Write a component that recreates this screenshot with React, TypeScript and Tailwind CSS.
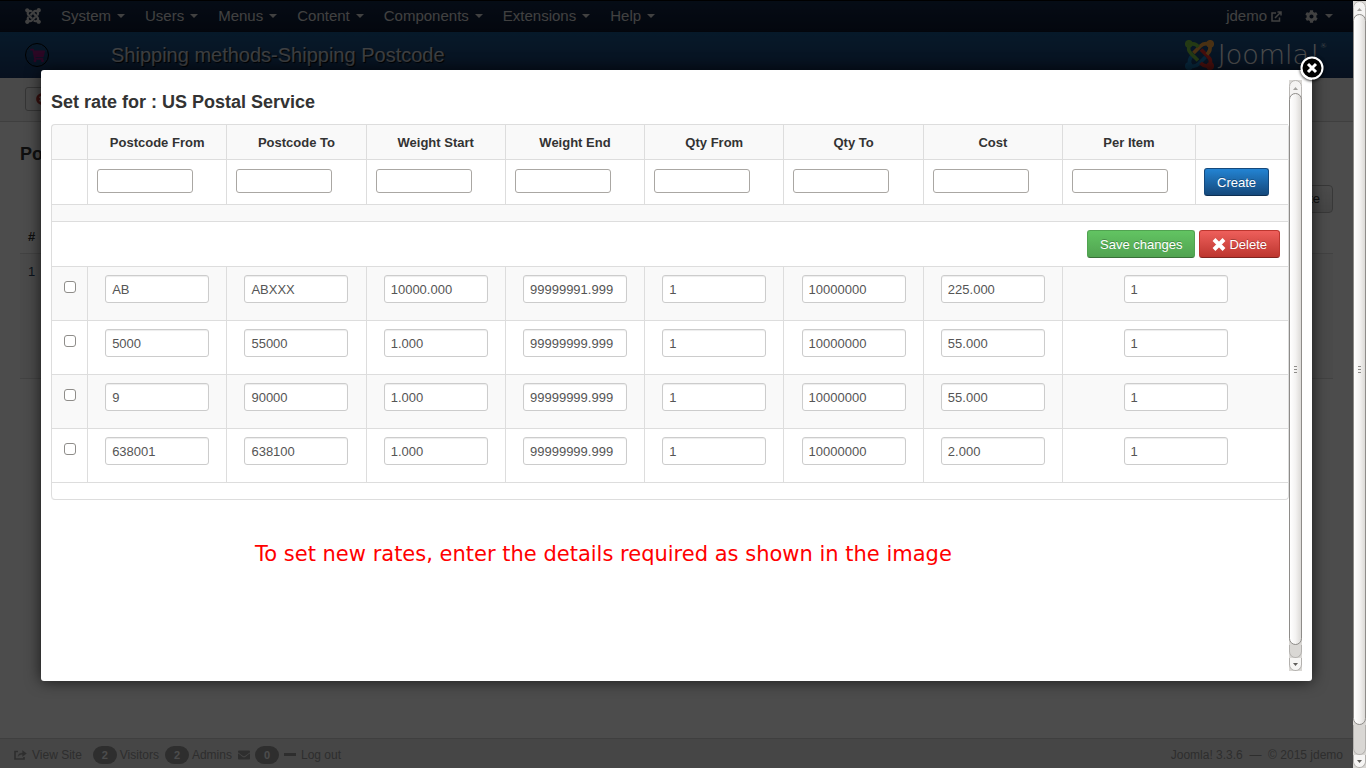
import React from 'react';
import { FaJoomla, FaCog, FaShoppingCart, FaTimesCircle, FaEnvelope } from 'react-icons/fa';

const menus = ['System', 'Users', 'Menus', 'Content', 'Components', 'Extensions', 'Help'];

const columns = [
  'Postcode From',
  'Postcode To',
  'Weight Start',
  'Weight End',
  'Qty From',
  'Qty To',
  'Cost',
  'Per Item',
];

const rates = [
  ['AB', 'ABXXX', '10000.000', '99999991.999', '1', '10000000', '225.000', '1'],
  ['5000', '55000', '1.000', '99999999.999', '1', '10000000', '55.000', '1'],
  ['9', '90000', '1.000', '99999999.999', '1', '10000000', '55.000', '1'],
  ['638001', '638100', '1.000', '99999999.999', '1', '10000000', '2.000', '1'],
];

function Caret() {
  return (
    <svg className="h-1 w-2" viewBox="0 0 8 4" fill="currentColor" aria-hidden="true">
      <path d="M0 0h8L4 4z" />
    </svg>
  );
}

function ScrollBar({ rest }: { rest: string }) {
  return (
    <div className="flex w-[13px] shrink-0 flex-col bg-[#d9d7d4]" aria-hidden="true">
      <div className="flex h-[18px] shrink-0 items-start justify-center rounded-t-full border border-[#b9b7b4] bg-[#f4f3f2] pt-[6px] text-[#a3a19e]">
        <svg className="h-[3px] w-[5px]" viewBox="0 0 5 3" fill="currentColor"><path d="M0 3h5L2.500 0z" /></svg>
      </div>
      <div className="-mt-[5px] flex flex-1 flex-col items-center justify-center gap-[2px] rounded-full border border-[#8e8c89] bg-linear-to-r from-white via-[#f4f3f2] to-[#dcdad7]">
        <div className="h-px w-[3px] bg-[#8e8c89]" />
        <div className="h-px w-[3px] bg-[#8e8c89]" />
        <div className="h-px w-[3px] bg-[#8e8c89]" />
      </div>
      <div className={rest}>
        <div className="h-full rounded-b-full border-x border-b border-[#b3b1ae] bg-[#d9d7d4]" />
      </div>
      <div className="flex h-[13px] shrink-0 items-center justify-center rounded-b-full border-x border-b border-[#b3b1ae] bg-[#f6f5f4] text-[#5f5d5a]">
        <svg className="h-[3px] w-[5px]" viewBox="0 0 5 3" fill="currentColor"><path d="M0 0h5L2.500 3z" /></svg>
      </div>
    </div>
  );
}

function JoomlaMark() {
  return (
    <svg className="h-[30px] w-[29px]" viewBox="0 0 29 30" fill="none" strokeWidth="3.700" aria-hidden="true">
      <g stroke="#1a7fc4">
        <circle cx="3.800" cy="26.200" r="2" />
        <path d="M4 25.500C9 27.500 11.500 26 13.500 24L20.500 17" />
        <path d="M5 25C3.500 20.500 4.500 18 7.500 15.500" />
      </g>
      <g stroke="#e8302a">
        <circle cx="25.200" cy="26.200" r="2" />
        <path d="M25 25C26.500 21 25 18.500 23 16.500L16 9.500" />
        <path d="M24.500 25.500C20.500 27 18 25.500 15.500 23" />
      </g>
      <g stroke="#f9a541">
        <circle cx="25.200" cy="3.800" r="2" />
        <path d="M25 4.500C20 2.500 17.500 4 15.500 6L8.500 13" />
        <path d="M24.500 5C26 9.500 24.500 12 22 14.500" />
      </g>
      <g stroke="#7ac143">
        <circle cx="3.800" cy="3.800" r="2" />
        <path d="M4.500 5C2.500 9.500 4 11.500 6 13.500L13 20.500" />
        <path d="M5 4.500C9 3 11.500 4.500 13.500 7" />
      </g>
    </svg>
  );
}

function Badge({ children }: { children: React.ReactNode }) {
  return (
    <span className="inline-flex h-[18px] w-6 items-center justify-center rounded-full bg-[#999] text-[11px] font-bold text-white">
      {children}
    </span>
  );
}

function Page() {
  return (
    <div className="flex min-h-full flex-col bg-white">
      <nav className="flex h-[31px] items-center border-b border-[#0a1428] bg-linear-to-b from-[#13294a] to-[#0d1930] pl-[25px] pr-5 text-[15px] text-[#d9d9d9]">
        <a href="#home" aria-label="Home" className="mr-[10px]"><FaJoomla className="h-[18px] w-4" /></a>
        {menus.map((m) => (
          <a key={m} href={'#' + m} className="flex items-center gap-[6px] px-[10px]">
            {m}
            <Caret />
          </a>
        ))}
        <a href="#site" className="ml-auto flex items-center gap-1">
          jdemo
          <svg className="h-[11px] w-[11px]" viewBox="0 0 11 11" fill="none" stroke="currentColor" strokeWidth="1.500" aria-hidden="true">
            <path d="M5 2H1v8h7.500V6.500M4 7L10 1M6.500 1H10v3.500" />
          </svg>
        </a>
        <button type="button" aria-label="Settings" className="ml-[23px] flex items-center gap-[7px]">
          <FaCog className="h-[13px] w-[13px]" />
          <Caret />
        </button>
      </nav>

      <header className="flex h-[46px] items-center bg-linear-to-b from-[#17568c] to-[#1a3867] pl-[25px] pr-[26px]">
        <div className="flex h-6 w-6 items-center justify-center rounded-full border border-black">
          <FaShoppingCart className="h-[15px] w-[15px] text-[#8f1878]" />
        </div>
        <h1 className="ml-[62px] text-[20px] text-white/80 [text-shadow:1px_1px_1px_#000]">Shipping methods-Shipping Postcode</h1>
        <div className="ml-auto flex items-center gap-1 text-white/80">
          <JoomlaMark />
          <span className="font-['DejaVu_Sans',sans-serif] text-[27px] leading-[44px] font-extralight text-white">
            Joomla!<sup className="-top-4 text-[7px]">®</sup>
          </span>
        </div>
      </header>

      <div className="flex h-11 items-center border-b border-[#d3d3d3] bg-[#f5f5f5] pb-[2px] pl-[25px]">
        <button type="button" aria-label="Close" className="flex h-6 w-20 items-center rounded-[3px] border border-[#b3b3b3] bg-[#f5f5f5] pl-[10px]">
          <FaTimesCircle className="h-3 w-3 text-[#bd362f]" />
        </button>
      </div>

      <main className="flex-1 px-5 pt-5 text-[13px] text-[#333]">
        <h2 className="text-[18px] leading-6 font-bold">Postcode</h2>
        <div className="mt-[19px] flex justify-end">
          <button type="button" className="h-7 rounded-[4px] border border-[#bbb] bg-linear-to-b from-white to-[#e6e6e6] px-3">Create</button>
        </div>
        <table className="mt-[7px] w-full text-left">
          <thead>
            <tr><th className="h-[33px] px-2 font-bold">#</th></tr>
          </thead>
          <tbody>
            <tr><td className="h-[125px] border-y border-[#ddd] bg-[#f9f9f9] px-2 pt-2 align-top text-[#26405e]">1</td></tr>
          </tbody>
        </table>
      </main>

      <footer className="flex h-[30px] items-center border-t border-[#d4d4d4] bg-[#ebebeb] pl-[14px] pr-[10px] pt-[3px] text-[12px] text-[#999]">
        <svg className="mr-[5px] h-[10px] w-[13px]" viewBox="0 0 13 10" fill="none" stroke="currentColor" strokeWidth="1.600" aria-hidden="true">
          <path d="M4 1.500H1V9h9V7" />
          <path d="M4 6.500C4 4 6 3 8.500 3V.5L12.500 3.500 8.500 6.500V4.500C6.500 4.500 5 5 4 6.500z" fill="currentColor" strokeWidth=".3" />
        </svg>
        <a href="#view">View Site</a>
        <span className="ml-[11px] mr-[3px] inline-flex"><Badge>2</Badge></span>Visitors
        <span className="ml-[6px] mr-[3px] inline-flex"><Badge>2</Badge></span>Admins
        <FaEnvelope className="ml-[6px] mr-[5px] h-3 w-3" />
        <Badge>0</Badge>
        <svg className="mx-[5px] h-3 w-3" viewBox="0 0 12 12" aria-hidden="true"><path d="M0 4h12v3H0z" fill="currentColor" /></svg>
        <a href="#logout">Log out</a>
        <span className="ml-auto">Joomla! 3.3.6 &nbsp;—&nbsp; © 2015 jdemo</span>
      </footer>
    </div>
  );
}

function RateTable() {
  const cell = 'border-l border-t border-[#ddd]';
  return (
    <table className="w-full table-fixed border-separate border-spacing-0 rounded-[4px] border-b border-r border-[#ddd] text-[13px] leading-[18px]">
      <colgroup>
        <col className="w-9" />
        <col /><col /><col /><col /><col /><col /><col />
        <col className="w-[133px]" />
        <col className="w-[93px]" />
      </colgroup>
      <thead>
        <tr className="bg-[#f9f9f9]">
          <th className={cell + ' rounded-tl-[4px]'} />
          {columns.map((c) => (
            <th key={c} scope="col" className={cell + ' pt-[9px] pb-[7px] font-bold'}>{c}</th>
          ))}
          <th className={cell} />
        </tr>
      </thead>
      <tbody>
        <tr>
          <td className={cell} />
          {columns.map((c) => (
            <td key={c} className={cell + ' px-[9px] pt-[9px] align-top'}>
              <input type="text" aria-label={'New ' + c} className="block h-6 w-24 rounded-[3px] border border-[#aaa7a3] bg-white px-1" />
            </td>
          ))}
          <td className={cell + ' p-2'}>
            <button type="button" className="block h-7 rounded-[3px] border border-[#15497c] border-b-[#0d2f52] bg-linear-to-b from-[#2384d3] to-[#15497c] px-3 pt-px text-white [text-shadow:0_-1px_0_rgba(0,0,0,0.25)]">
              Create
            </button>
          </td>
        </tr>
        <tr className="bg-[#f9f9f9]">
          <td colSpan={10} className={cell + ' h-[17px]'} />
        </tr>
        <tr>
          <td colSpan={10} className={cell + ' p-2'}>
            <div className="flex justify-end gap-1">
              <button type="button" className="h-7 rounded-[3px] border border-[#51a351] border-b-[#387038] bg-linear-to-b from-[#62c462] to-[#51a351] px-3 pt-px text-white [text-shadow:0_-1px_0_rgba(0,0,0,0.25)]">
                Save changes
              </button>
              <button type="button" className="flex h-7 items-center gap-[3px] rounded-[3px] border border-[#bd362f] border-b-[#802420] bg-linear-to-b from-[#ee5f5b] to-[#bd362f] px-3 pt-px text-white [text-shadow:0_-1px_0_rgba(0,0,0,0.25)]">
                <svg className="h-[14px] w-[14px]" viewBox="0 0 14 14" stroke="currentColor" strokeWidth="4" aria-hidden="true">
                  <path d="M2 1.500l10 10M12 1.500L2 11.500" />
                </svg>
                Delete
              </button>
            </div>
          </td>
        </tr>
        {rates.map((row, r) => (
          <tr key={r} className={r % 2 === 0 ? 'bg-[#f9f9f9]' : 'bg-white'}>
            <td className={cell + ' pt-[14px] align-top'}>
              <input
                type="checkbox"
                aria-label={'Select ' + row[0]}
                className="mx-auto block h-3 w-3 appearance-none rounded-[3px] border border-[#8f8d8a] bg-white checked:bg-[#15497c]"
              />
            </td>
            {row.map((v, i) => (
              <td key={i} colSpan={i === 7 ? 2 : 1} className={cell + ' pb-[17px] pt-2'}>
                <input
                  type="text"
                  aria-label={columns[i] + ', row ' + (r + 1)}
                  defaultValue={v}
                  className="mx-auto block h-7 w-[104px] rounded-[3px] border border-[#ccc] bg-white px-[6px] text-[#555] shadow-[inset_0_1px_1px_rgba(0,0,0,0.075)]"
                />
              </td>
            ))}
          </tr>
        ))}
        <tr>
          <td colSpan={10} className={cell + ' h-[17px] rounded-bl-[4px]'} />
        </tr>
      </tbody>
    </table>
  );
}

export default function App() {
  return (
    <div className="flex h-screen border-t border-black font-['Liberation_Sans',Arial,sans-serif]">
      <div className="relative min-w-0 flex-1 overflow-hidden">
        <div className="grid h-full">
          <Page />
        </div>
        <div className="absolute inset-0 flex bg-black/70 px-[41px] pb-[87px] pt-[69px]">
          <div role="dialog" aria-labelledby="rate-title" className="relative flex min-w-0 flex-1 rounded-[3px] bg-white p-[10px] text-[#333] shadow-[0_0_15px_rgba(0,0,0,0.7)]">
            <div className="min-w-0 flex-1">
              <h2 id="rate-title" className="py-[10px] text-[18px] leading-6 font-bold">Set rate for : US Postal Service</h2>
              <RateTable />
              <p className="mt-10 pl-[204px] font-['DejaVu_Sans',sans-serif] text-[21px] leading-7 text-[#f00]">
                To set new rates, enter the details required as shown in the image
              </p>
            </div>
            <ScrollBar rest="h-[13px] shrink-0" />
            <button type="button" aria-label="Close dialog" className="absolute -right-3 -top-[14px] h-6 w-6 rounded-full shadow-[0_1px_3px_rgba(0,0,0,0.8)]">
              <svg className="h-6 w-6" viewBox="0 0 24 24" aria-hidden="true">
                <circle cx="12" cy="12" r="10.500" fill="#000" stroke="#fff" strokeWidth="2" />
                <path d="M8 8l8 8M16 8l-8 8" stroke="#fff" strokeWidth="3" />
              </svg>
            </button>
          </div>
        </div>
      </div>
      <ScrollBar rest="h-[30px] shrink-0" />
    </div>
  );
}
